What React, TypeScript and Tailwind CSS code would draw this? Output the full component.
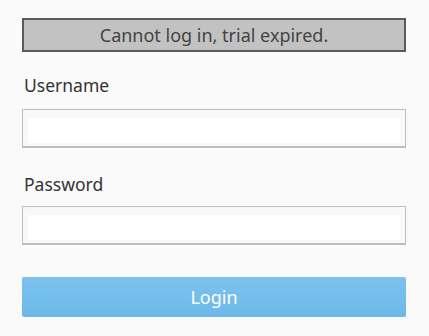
export default function App() {
  return (
    <div
      className="min-h-[336px] w-[429px] bg-[#fafafa] px-[22px] pt-[18px]"
      style={{ fontFamily: '"Noto Sans", "Open Sans", sans-serif' }}
    >
      <div className="flex h-[34px] w-[384px] items-center justify-center border-2 border-[#5a5a5a] bg-[#c2c2c2] text-[18px] text-[#444]">
        Cannot log in, trial expired.
      </div>

      <label className="mt-[21px] block pl-[2px] text-[17.5px] leading-[24px] text-[#333]">
        Username
      </label>
      <div className="mt-[12px] h-[39px] w-[384px] border border-b-2 border-[#bdbdbd] bg-[#f8f8f8] px-[5px] pt-[8px]">
        <input className="h-[25px] w-full bg-white outline-none" />
      </div>

      <label className="mt-[24px] block pl-[2px] text-[17.5px] leading-[24px] text-[#333]">
        Password
      </label>
      <div className="mt-[10px] h-[39px] w-[384px] border border-b-2 border-[#bdbdbd] bg-[#f8f8f8] px-[5px] pt-[8px]">
        <input type="password" className="h-[25px] w-full bg-white outline-none" />
      </div>

      <button className="mt-[32px] flex h-[40px] w-[384px] items-center justify-center rounded-[2px] bg-gradient-to-b from-[#7cc2ee] to-[#6db8ea] text-[18px] text-white">
        Login
      </button>
    </div>
  );
}
